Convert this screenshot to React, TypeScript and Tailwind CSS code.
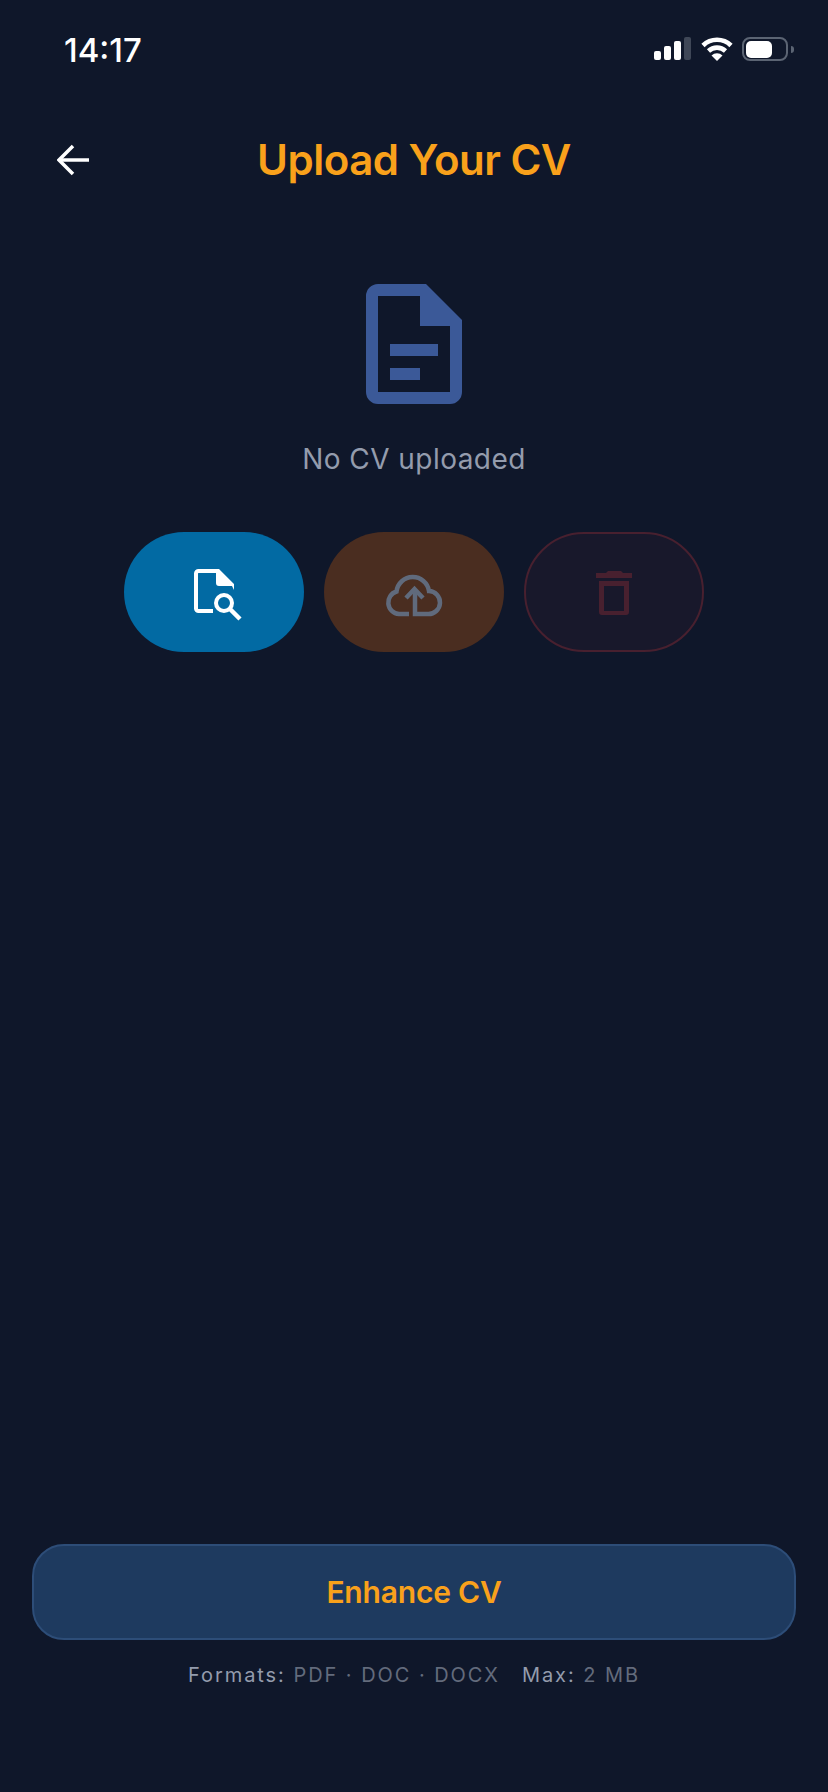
const font = "font-['Inter',sans-serif]";

function SignalIcon() {
  return (
    <svg width="38" height="24" viewBox="0 0 38 24">
      <rect x="0" y="14" width="7" height="9" rx="2" fill="#fff" />
      <rect x="10" y="9" width="7" height="14" rx="2" fill="#fff" />
      <rect x="20" y="4" width="7" height="19" rx="2" fill="#fff" />
      <rect x="30" y="0" width="7" height="23" rx="2" fill="#3f4757" />
    </svg>
  );
}

function WifiIcon() {
  return (
    <svg width="32" height="24" viewBox="0 0 32 24" fill="none" stroke="#fff" strokeWidth="4.6">
      <path d="M2 8.5a20 20 0 0 1 28 0" />
      <path d="M7.5 14a12.4 12.4 0 0 1 17 0" />
      <path d="M10.5 18.5l5.5 5.5 5.5-5.5a8 8 0 0 0-11 0z" fill="#fff" stroke="none" />
    </svg>
  );
}

function BatteryIcon() {
  return (
    <div className="flex items-center gap-[3px]">
      <div className="flex h-6 w-[46px] items-center rounded-[8px] border-2 border-[#5b6473] px-[2px]">
        <div className="h-[17px] w-[26px] rounded-[5px] bg-white" />
      </div>
      <div className="h-[7px] w-[3px] rounded-r-full bg-[#5b6473]" />
    </div>
  );
}

function StatusBar() {
  return (
    <div className="mt-[37px] flex h-[24px] items-center justify-between pr-[34px] pl-16">
      <span className="pt-[2px] text-[33px] leading-none font-medium text-white">14:17</span>
      <div className="flex items-center gap-[9px]">
        <SignalIcon />
        <WifiIcon />
        <BatteryIcon />
      </div>
    </div>
  );
}

function DocumentIcon() {
  return (
    <svg width="144" height="144" viewBox="0 0 24 24" fill="#3b5998">
      <path
        fillRule="evenodd"
        d="M6 2h8l6 6v12a2 2 0 0 1-2 2H6a2 2 0 0 1-2-2V4a2 2 0 0 1 2-2zm0 2v16h12V9h-5V4H6zm2 8h8v2H8v-2zm0 4h5v2H8v-2z"
      />
    </svg>
  );
}

function PreviewIcon() {
  return (
    <svg width="70" height="70" viewBox="-1 6 70 70" fill="none" stroke="#fff" strokeWidth="4">
      <path d="M33 60H18.5a2.500 2.500 0 0 1-2.500-2.500V22.500a2.500 2.500 0 0 1 2.500-2.500H37" />
      <path d="M36 18h3l15 15v6l-2-4H39a3 3 0 0 1-3-3z" fill="#fff" stroke="none" />
      <circle cx="44" cy="52" r="8" />
      <path d="M50 58l10 10" strokeWidth="4.500" />
    </svg>
  );
}

function UploadIcon() {
  return (
    <svg width="80" height="60" viewBox="-1 6 80 60" fill="none" stroke="#606a7c" strokeWidth="4.500">
      <path d="M34 58H24A11.500 11.500 0 0 1 21.500 35.500A16.400 16.400 0 0 1 54 35A11.500 11.500 0 0 1 53 58H40V36" />
      <path d="M31 42l8.500-9 8.500 9" />
    </svg>
  );
}

function TrashIcon() {
  return (
    <svg width="70" height="70" viewBox="-1 1 70 70" fill="#48202f">
      <path d="M16 17h10l2-2h13l2 2h9v5H16z" />
      <path fillRule="evenodd" d="M19 25h30v31a3 3 0 0 1-3 3H22a3 3 0 0 1-3-3zm5 5v25h20V30z" />
    </svg>
  );
}

export default function App() {
  return (
    <div className={`flex h-[1792px] w-[828px] flex-col bg-[#0f172a] ${font}`}>
      <StatusBar />

      <div className="relative mt-[79px] flex h-10 items-center justify-center">
        <button className="absolute top-[4px] left-[57px]">
          <svg width="32" height="32" viewBox="0 0 32 32" fill="none" stroke="#fff" strokeWidth="3.500">
            <path d="M16 2L2 16l14 14" />
            <path d="M3 16h29" />
          </svg>
        </button>
        <h1 className="text-[42px] leading-none font-semibold tracking-[-0.5px] text-[#f9a11b]">Upload Your CV</h1>
      </div>

      <div className="mt-[92px] flex flex-col items-center">
        <DocumentIcon />
        <p className="mt-[27px] text-[28px] leading-8 tracking-[0.45px] text-[#949cad]">No CV uploaded</p>
      </div>

      <div className="mt-[57px] flex justify-center gap-5">
        <button className="flex h-[120px] w-[180px] items-center justify-center rounded-[60px] bg-[#026aa3]">
          <PreviewIcon />
        </button>
        <button className="flex h-[120px] w-[180px] items-center justify-center rounded-[60px] bg-[#4a2d20]">
          <UploadIcon />
        </button>
        <button className="flex h-[120px] w-[180px] items-center justify-center rounded-[60px] border-2 border-[#48202f] bg-[#18182b]">
          <TrashIcon />
        </button>
      </div>

      <div className="mt-auto mb-[105px] flex flex-col items-center px-8">
        <button className="h-[96px] w-full rounded-[32px] border-2 border-[#2d4d78] bg-[#1e3a5f] text-[30px] font-semibold tracking-[-0.2px] text-[#f9a11b]">
          Enhance CV
        </button>
        <p className="mt-[23px] text-[20px] leading-6 tracking-[1.95px] text-[#949cad]">
          Formats: <span className="text-[#636b7c]">PDF · DOC · DOCX</span>
          <span className="ml-[22px]">Max:</span> <span className="text-[#636b7c]">2 MB</span>
        </p>
      </div>
    </div>
  );
}
